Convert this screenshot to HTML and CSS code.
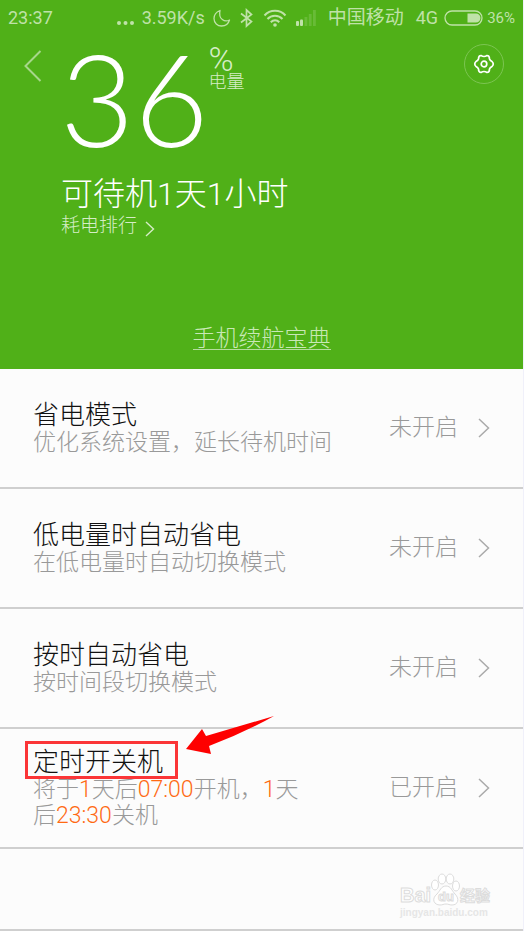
FILE: index.html
```html
<!DOCTYPE html>
<html lang="zh-CN">
<head>
<meta charset="utf-8">
<meta name="viewport" content="width=device-width, initial-scale=1">
<title>电量</title>
<link rel="stylesheet" href="styles.css">
</head>
<body>
<div class="screen">
  <header class="hero">
    <div class="status">
      <span class="clock">23:37</span>
      <svg class="dots" width="20" height="20" viewBox="0 0 20 20" fill="currentColor"><circle cx="3" cy="15" r="2"/><circle cx="9.500" cy="15" r="2"/><circle cx="16" cy="15" r="2"/></svg>
      <span class="speed">3.59K/s</span>
      <svg class="moon" width="18" height="20" viewBox="0 0 18 20" fill="none" stroke="currentColor" stroke-width="1.300" stroke-linejoin="round"><path d="M7 2.500C3.500 4 1 7 1 10.500c0 4.500 3.500 7.500 7.500 7.500 4 0 7-2.500 8-6-4.500 2.500-11.500-.5-9.500-9.500z"/></svg>
      <svg class="bluetooth" width="13" height="20" viewBox="0 0 13 20" fill="none" stroke="currentColor" stroke-width="1.700"><path d="M1 5.500l10.500 8L6.500 18V2l5 4.500L1 14.500"/></svg>
      <svg class="wifi" width="24" height="20" viewBox="0 0 24 20" fill="none" stroke="currentColor" stroke-width="2"><path d="M1.500 7.500C7 1.200 17 1.200 22.500 7.500M4.500 11c4-4.500 11-4.500 15 0M7.800 14.200c2.500-2.500 6-2.500 8.500 0"/><circle cx="12" cy="17" r="1.800" fill="currentColor" stroke="none"/></svg>
      <svg class="signal" width="22" height="20" viewBox="0 0 22 20" fill="currentColor"><rect x="1" y="13" width="3" height="5" rx="1"/><rect x="5" y="11.500" width="3" height="6.500" rx="1"/><path opacity=".22" d="M9.500 9h2.800v9H9.500zM13.800 6h2.800v12h-2.800zM18 2h2.800v16H18z"/></svg>
      <span class="carrier">中国移动</span>
      <span class="network">4G</span>
      <svg class="battery" width="39" height="16" viewBox="0 0 39 16"><rect x="1" y="1" width="37" height="14" rx="7" fill="none" stroke="currentColor" stroke-width="1.300"/><path fill="currentColor" d="M23.500 3.500H32a4.500 4.500 0 0 1 0 9h-8.500z"/></svg>
      <span class="charge">36%</span>
    </div>
    <div class="summary">
      <button class="back" type="button" aria-label="返回">
        <svg width="18" height="32" viewBox="0 0 18 32" fill="none" stroke="currentColor" stroke-width="2"><path d="M16.500 1L1.500 16l15 15"/></svg>
      </button>
      <div class="level">
        <span class="number">36</span>
        <span class="unit"><span class="percent">%</span><span class="unit-name">电量</span></span>
      </div>
      <button class="settings" type="button" aria-label="设置">
        <svg width="22" height="22" viewBox="0 0 22 22" fill="none" stroke="currentColor" stroke-width="1.700" stroke-linejoin="round"><path d="M8 2.500Q11 4.500 14 2.500Q16.500 2.500 16.500 6Q17 7.500 19 8.500Q21.500 11 19 13.500Q17 14.500 16.500 16Q16.500 19.500 14 19.500Q11 17.500 8 19.500Q5.500 19.500 5.500 16Q5 14.500 3 13.500Q.5 11 3 8.500Q5 7.500 5.500 6Q5.500 2.500 8 2.500z"/><circle cx="11" cy="11" r="2.800"/></svg>
      </button>
    </div>
    <div class="standby">
      <p class="remaining">可待机1天1小时</p>
      <a class="ranking" href="#ranking">耗电排行
        <svg width="10" height="24" viewBox="0 0 10 24" fill="none" stroke="currentColor" stroke-width="1.400"><path d="M1 8l7.500 7L1 22"/></svg>
      </a>
    </div>
    <a class="guide" href="#guide">手机续航宝典</a>
  </header>
  <main class="list">
    <a class="row" href="#saver">
      <span class="text"><span class="title">省电模式</span><span class="detail">优化系统设置，延长待机时间</span></span>
      <span class="state">未开启</span>
      <svg class="chevron" viewBox="0 0 12 20"><path d="M1 1l9.500 9L1 19"/></svg>
    </a>
    <a class="row" href="#low">
      <span class="text"><span class="title">低电量时自动省电</span><span class="detail">在低电量时自动切换模式</span></span>
      <span class="state">未开启</span>
      <svg class="chevron" viewBox="0 0 12 20"><path d="M1 1l9.500 9L1 19"/></svg>
    </a>
    <a class="row" href="#schedule">
      <span class="text"><span class="title">按时自动省电</span><span class="detail">按时间段切换模式</span></span>
      <span class="state">未开启</span>
      <svg class="chevron" viewBox="0 0 12 20"><path d="M1 1l9.500 9L1 19"/></svg>
    </a>
    <a class="row" href="#power">
      <span class="text"><span class="title marked">定时开关机<svg class="arrow" width="90" height="40" viewBox="0 0 90 40"><path fill="#fe0000" d="M88 1L20 21l-4-7L0 34l25 5-2-8Q58 18 88 1z"/></svg></span><span class="detail">将于<b>1</b>天后<b>07:00</b>开机，<b>1</b>天<br>后<b>23:30</b>关机</span></span>
      <span class="state">已开启</span>
      <svg class="chevron" viewBox="0 0 12 20"><path d="M1 1l9.500 9L1 19"/></svg>
    </a>
    <div class="row last">
      <svg class="watermark" width="100" height="50" viewBox="0 0 100 50" fill="#fff" stroke="#dcdcdc">
        <g class="brand"><text x="3" y="32">Bai</text></g>
        <ellipse cx="38" cy="15" rx="3.500" ry="5"/><ellipse cx="45" cy="9" rx="3.800" ry="5"/><ellipse cx="53" cy="9" rx="3.800" ry="5"/><ellipse cx="59" cy="16" rx="3.500" ry="5"/>
        <path d="M49 16c5 0 6 5 9 8 5 5 3 11-3 11-3 0-3-1-6-1s-3 1-6 1c-6 0-9-6-3-11 3-3 4-8 9-8z"/>
        <g class="du"><text x="41" y="31">du</text></g>
        <g class="cn"><text x="63" y="31">经验</text></g>
        <g class="site"><text x="3" y="46">jingyan.baidu.com</text></g>
      </svg>
    </div>
  </main>
</div>
</body>
</html>
```
FILE: styles.css
```css
* { box-sizing: border-box; }

body {
  margin: 0;
  background: #fcfcfc;
  font-family: Roboto, "Noto Sans CJK SC", sans-serif;
  font-weight: 300;
}

a { color: inherit; text-decoration: none; }

button {
  padding: 0;
  border: 0;
  background: none;
  color: inherit;
}

svg { display: block; flex: none; }

.screen {
  min-height: 100vh;
  border-right: 1px solid #f0f0fa;
}

.hero {
  display: flex;
  flex-direction: column;
  height: 369px;
  background: #50b018;
  color: #fff;
}

.status {
  display: flex;
  align-items: center;
  height: 36px;
  padding: 0 8px;
  color: #bfe2a8;
  font-size: 18px;
  font-weight: 400;
  line-height: 20px;
  white-space: nowrap;
}

.clock { margin-right: auto; }
.dots { margin-right: 6px; }
.speed { margin-right: 8px; }
.moon { margin-right: 9px; }
.bluetooth { margin-right: 10px; }
.wifi { margin-right: 8px; }
.signal { margin-right: 11px; }
.carrier { margin-right: 12px; font-size: 19px; }
.network { margin-right: 6px; }
.battery { margin-right: 4px; }
.charge { font-size: 15px; }

.summary {
  display: flex;
  align-items: flex-start;
  height: 132px;
  padding: 8px 19px 0 24px;
}

.back {
  margin-top: 6px;
  color: #a7d78b;
}

.level {
  display: flex;
  flex: 1;
  margin-left: 18px;
}

.number {
  font-family: Lato, sans-serif;
  font-size: 128px;
  font-weight: 300;
  line-height: 108px;
}

.unit {
  display: flex;
  flex-direction: column;
  color: #d5edc6;
}

.percent { font-size: 34px; line-height: 30px; }
.unit-name { font-size: 18px; line-height: 16px; }

.settings {
  display: grid;
  place-items: center;
  width: 40px;
  height: 40px;
  border: 1px solid #7cc552;
  border-radius: 50%;
}

.standby { padding: 6px 61px 0; }

.remaining {
  margin: 0;
  font-size: 32px;
  line-height: 40px;
}

.ranking {
  display: inline-flex;
  align-items: center;
  gap: 8px;
  color: #d5edc6;
  font-size: 19px;
  line-height: 22px;
}

.guide {
  align-self: center;
  margin-top: auto;
  margin-bottom: 19px;
  border-bottom: 1px solid #b5dd9c;
  color: #c9e8b6;
  font-size: 23px;
  line-height: 20px;
}

.row {
  display: flex;
  align-items: center;
  min-height: 120px;
  padding: 0 33px;
  border-bottom: 2px solid #cfcfcf;
  color: #999;
  font-size: 23px;
}

.text { flex: 1; }

.title {
  display: block;
  width: fit-content;
  color: #111;
  font-size: 26px;
  line-height: 30px;
}

.detail {
  display: block;
  line-height: 26px;
}

.detail b {
  color: #ff6a13;
  font-weight: 300;
}

.state {
  margin-right: 20px;
  line-height: 26px;
}

.chevron {
  width: 12px;
  height: 20px;
  fill: none;
  stroke: #aaa;
  stroke-width: 1.5;
}

.marked {
  position: relative;
}

.marked::before {
  position: absolute;
  inset: -6px -15px -2px -8px;
  border: 3px solid #fb3537;
  content: "";
}

.arrow {
  position: absolute;
  top: -32px;
  left: calc(100% + 23px);
}

.last {
  min-height: 82px;
  justify-content: flex-end;
  padding: 12px 26px 0 0;
}

.brand, .du, .cn, .site { font-family: "Liberation Sans", "Noto Sans CJK SC", sans-serif; font-weight: 700; }
.brand { font-size: 20px; }
.du { font-size: 13px; }
.cn { font-size: 15px; }
.site { font-size: 10px; fill: #e6e6e6; stroke: none; }
```
